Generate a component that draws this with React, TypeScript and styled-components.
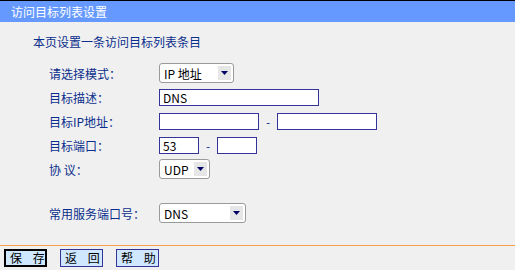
import React from "react"
import styled, { createGlobalStyle } from "styled-components"

const GlobalStyle = createGlobalStyle`
  html, body {
    margin: 0;
    padding: 0;
    background: #f0f0f0;
  }
  body {
    font-family: "Noto Sans CJK SC", "DejaVu Sans", sans-serif;
    font-size: 12px;
  }
`

const Page = styled.div`
  width: 515px;
  height: 270px;
  overflow: hidden;
  border-top: 1px solid #000;
  box-sizing: border-box;
`

const Header = styled.div`
  height: 21px;
  line-height: 21px;
  background: #6699ff;
  color: #fff;
  padding-left: 11px;
  font-size: 12px;
`

const Intro = styled.div`
  margin-top: 12px;
  padding-left: 33px;
  height: 16px;
  line-height: 16px;
  color: #0a2e8c;
`

const Form = styled.div`
  margin-top: 11px;
  padding-left: 49px;
  display: flex;
  flex-direction: column;
`

const Row = styled.div<{ $gapBefore?: number }>`
  height: 24px;
  display: flex;
  align-items: center;
  margin-top: ${(p) => p.$gapBefore ?? 0}px;
`

const Label = styled.div`
  width: 110px;
  color: #0a2e8c;
  white-space: pre;
`

const Controls = styled.div`
  display: flex;
  align-items: center;
`

const TextBox = styled.input<{ $w: number }>`
  width: ${(p) => p.$w}px;
  height: 17px;
  box-sizing: border-box;
  border: 1px solid #333399;
  background: #fff;
  padding: 0 0 0 3px;
  margin: 0;
  font-family: "Noto Sans CJK SC", "DejaVu Sans", sans-serif;
  font-size: 12px;
  color: #000;
  outline: none;
`

const Dash = styled.span`
  width: 18px;
  text-align: center;
  color: #0a2e8c;
`

const SelectBox = styled.div<{ $w: number }>`
  width: ${(p) => p.$w}px;
  height: 20px;
  box-sizing: border-box;
  border: 1px solid #9a9a9a;
  border-radius: 3px;
  background: #fff;
  display: flex;
  align-items: center;
  justify-content: space-between;
  padding: 0 2px 0 4px;
  color: #000;
`

const ArrowBox = styled.span`
  width: 13px;
  height: 14px;
  background: #e6e6e6;
  display: flex;
  align-items: center;
  justify-content: center;
`

const Rule = styled.div`
  margin-top: 20px;
  height: 1px;
  background: #f4a048;
`

const Footer = styled.div`
  display: flex;
  gap: 13px;
  padding-left: 4px;
  margin-top: 3px;
`

const Button = styled.button<{ $focused?: boolean }>`
  width: 43px;
  height: 18px;
  box-sizing: border-box;
  padding: 0;
  margin: 0;
  background: #cfe8ff;
  border: ${(p) => (p.$focused ? "2px solid #000" : "1px solid #333399")};
  font-family: "Noto Sans CJK SC", "DejaVu Sans", sans-serif;
  font-size: 12px;
  line-height: 14px;
  color: #000;
  letter-spacing: 4px;
  text-indent: 4px;
  white-space: pre;
`

const Select = ({ width, value }: { width: number; value: string }) => (
  <SelectBox $w={width}>
    <span>{value}</span>
    <ArrowBox>
      <svg width="7" height="4" viewBox="0 0 7 4">
        <path d="M0 0H7L3.5 4Z" fill="#000066" />
      </svg>
    </ArrowBox>
  </SelectBox>
)

export default function App() {
  return (
    <Page>
      <GlobalStyle />
      <Header>访问目标列表设置</Header>
      <Intro>本页设置一条访问目标列表条目</Intro>
      <Form>
        <Row>
          <Label>请选择模式：</Label>
          <Controls>
            <Select width={75} value="IP 地址" />
          </Controls>
        </Row>
        <Row>
          <Label>目标描述：</Label>
          <Controls>
            <TextBox $w={160} defaultValue="DNS" />
          </Controls>
        </Row>
        <Row>
          <Label>目标IP地址：</Label>
          <Controls>
            <TextBox $w={100} defaultValue="" />
            <Dash>-</Dash>
            <TextBox $w={100} defaultValue="" />
          </Controls>
        </Row>
        <Row>
          <Label>目标端口：</Label>
          <Controls>
            <TextBox $w={40} defaultValue="53" />
            <Dash>-</Dash>
            <TextBox $w={40} defaultValue="" />
          </Controls>
        </Row>
        <Row>
          <Label>协 议：</Label>
          <Controls>
            <Select width={51} value="UDP" />
          </Controls>
        </Row>
        <Row $gapBefore={20}>
          <Label>常用服务端口号：</Label>
          <Controls>
            <Select width={87} value="DNS" />
          </Controls>
        </Row>
      </Form>
      <Rule />
      <Footer>
        <Button $focused>保 存</Button>
        <Button>返 回</Button>
        <Button>帮 助</Button>
      </Footer>
    </Page>
  )
}
